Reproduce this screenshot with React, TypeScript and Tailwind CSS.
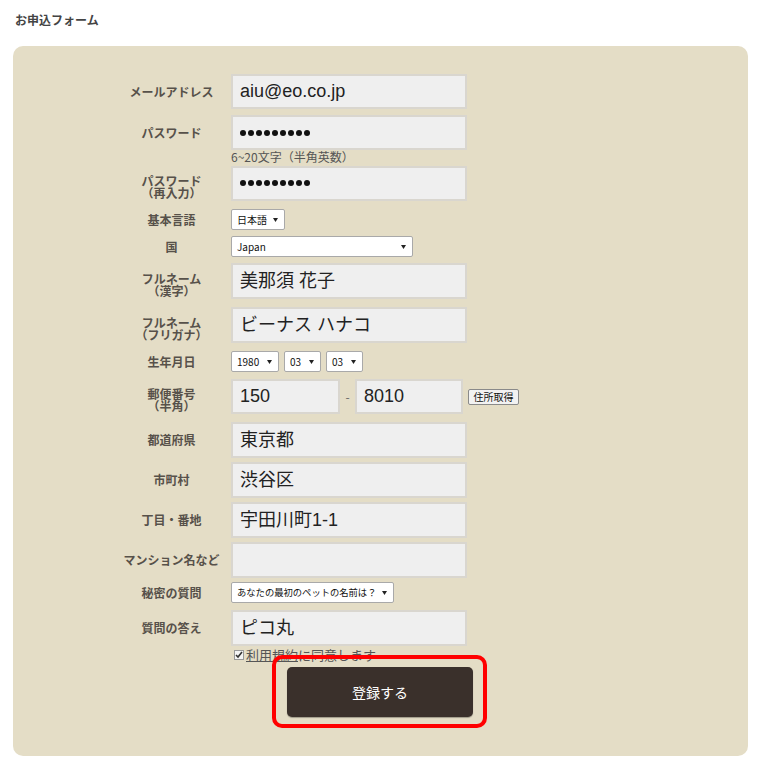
import React from "react";

const jp = { fontFamily: '"Noto Sans CJK JP", "Liberation Sans", sans-serif' };
const inputFont = { fontFamily: '"Liberation Sans", "Noto Sans CJK JP", sans-serif' };

type RowProps = {
  label: string[];
  mt: string;
  h: string;
  children: React.ReactNode;
};

const Row: React.FC<RowProps> = ({ label, mt, h, children }) => (
  <div className={`flex items-center ${mt} ${h}`}>
    <div
      className={`flex w-[119px] shrink-0 flex-col items-center text-[12px] font-bold leading-[12px] text-[#57514a] ${
        label.length > 1 ? "pt-[7px]" : "pt-[0px]"
      }`}
      style={jp}
    >
      {label.map((l) => (
        <span key={l} className="block h-[12px] whitespace-nowrap">
          {l}
        </span>
      ))}
    </div>
    {children}
  </div>
);

const TextBox: React.FC<{ value?: string; w?: string; h?: string }> = ({
  value = "",
  w = "w-[236px]",
  h = "h-[36px]",
}) => (
  <div
    className={`flex items-center border-2 border-[#d9d6cf] bg-[#efefef] px-[7px] text-[18px] text-[#222] ${w} ${h}`}
    style={inputFont}
  >
    {value}
  </div>
);

const Dots = () => (
  <div className="flex h-[35px] w-[236px] items-center gap-[2px] border-2 border-[#d9d6cf] bg-[#efefef] px-[7px]">
    {[...Array(9)].map((_, i) => (
      <span key={i} className="h-[6px] w-[6px] rounded-full bg-[#111]" />
    ))}
  </div>
);

const Select: React.FC<{ value: string; w: string; small?: boolean }> = ({ value, w, small }) => (
  <div
    className={`flex h-[21px] items-center justify-between rounded-[2px] border border-[#a9a9a9] bg-white pl-[5px] pr-[6px] text-[#111] ${
      small ? "text-[9.3px]" : "text-[10px]"
    } ${w}`}
    style={jp}
  >
    <span className="whitespace-nowrap">{value}</span>
    <svg width="5" height="4" viewBox="0 0 5 4" className="shrink-0">
      <path d="M0 0h5L2.5 4z" fill="#222" />
    </svg>
  </div>
);

export default function App() {
  return (
    <div className="h-[769px] w-[761px] overflow-hidden bg-white" style={jp}>
      <div className="px-[15px] pt-[13px] text-[12px] font-bold leading-[14px] text-[#444]">
        お申込フォーム
      </div>
      <div className="relative ml-[13px] mt-[19px] h-[710px] w-[735px] rounded-[10px] bg-[#e4ddc6] pl-[99px] pt-[28px]">
        <Row label={["メールアドレス"]} mt="mt-0" h="h-[35px]">
          <TextBox value="aiu@eo.co.jp" h="h-[35px]" />
        </Row>
        <Row label={["パスワード"]} mt="mt-[6px]" h="h-[35px]">
          <Dots />
        </Row>
        <div className="ml-[119px] h-[14px] text-[12px] leading-[14px] text-[#555]">
          6~20文字（半角英数）
        </div>
        <Row label={["パスワード", "（再入力）"]} mt="mt-[1px]" h="h-[36px]">
          <Dots />
        </Row>
        <Row label={["基本言語"]} mt="mt-[8px]" h="h-[21px]">
          <Select value="日本語" w="w-[54px]" />
        </Row>
        <Row label={["国"]} mt="mt-[6px]" h="h-[21px]">
          <Select value="Japan" w="w-[182px]" />
        </Row>
        <Row label={["フルネーム", "（漢字）"]} mt="mt-[6px]" h="h-[36px]">
          <TextBox value="美那須 花子" />
        </Row>
        <Row label={["フルネーム", "（フリガナ）"]} mt="mt-[8px]" h="h-[36px]">
          <TextBox value="ビーナス ハナコ" />
        </Row>
        <Row label={["生年月日"]} mt="mt-[8px]" h="h-[21px]">
          <div className="flex gap-[5px]">
            <Select value="1980" w="w-[48px]" />
            <Select value="03" w="w-[37px]" />
            <Select value="03" w="w-[37px]" />
          </div>
        </Row>
        <Row label={["郵便番号", "（半角）"]} mt="mt-[7px]" h="h-[35px]">
          <div className="flex items-center">
            <TextBox value="150" w="w-[109px]" h="h-[35px]" />
            <span className="w-[15px] text-center text-[12px] text-[#666]">-</span>
            <TextBox value="8010" w="w-[108px]" h="h-[35px]" />
            <div className="ml-[5px] flex h-[16px] w-[51px] items-center justify-center rounded-[2px] border border-[#8a8a8a] bg-[#f2f2f2] text-[10px] text-[#111]">
              住所取得
            </div>
          </div>
        </Row>
        <Row label={["都道府県"]} mt="mt-[8px]" h="h-[36px]">
          <TextBox value="東京都" />
        </Row>
        <Row label={["市町村"]} mt="mt-[4px]" h="h-[36px]">
          <TextBox value="渋谷区" />
        </Row>
        <Row label={["丁目・番地"]} mt="mt-[4px]" h="h-[36px]">
          <TextBox value="宇田川町1-1" />
        </Row>
        <Row label={["マンション名など"]} mt="mt-[4px]" h="h-[36px]">
          <TextBox />
        </Row>
        <Row label={["秘密の質問"]} mt="mt-[4px]" h="h-[21px]">
          <Select value="あなたの最初のペットの名前は？" w="w-[163px]" small />
        </Row>
        <Row label={["質問の答え"]} mt="mt-[7px]" h="h-[36px]">
          <TextBox value="ピコ丸" />
        </Row>
        <div className="ml-[122px] mt-[2px] flex h-[14px] items-center gap-[2px] text-[13px] leading-[14px] text-[#555]">
          <span className="flex h-[10px] w-[10px] items-center justify-center border border-[#999] bg-[#f4f4f4]">
            <svg width="8" height="8" viewBox="0 0 8 8">
              <path d="M1 4l2 2 4-5" stroke="#333" strokeWidth="1.6" fill="none" />
            </svg>
          </span>
          <span>
            <span className="underline">利用規約</span>に同意します
          </span>
        </div>
        <div className="ml-[175px] mt-[5px] flex h-[50px] w-[186px] items-center justify-center rounded-[5px] bg-[#3a302b] text-[14px] text-white shadow-[0_1px_1px_rgba(0,0,0,0.3)]">
          登録する
        </div>
        <div className="absolute left-[259px] top-[609px] h-[73px] w-[215px] rounded-[10px] border-[4px] border-[#ff0000]" />
      </div>
    </div>
  );
}
